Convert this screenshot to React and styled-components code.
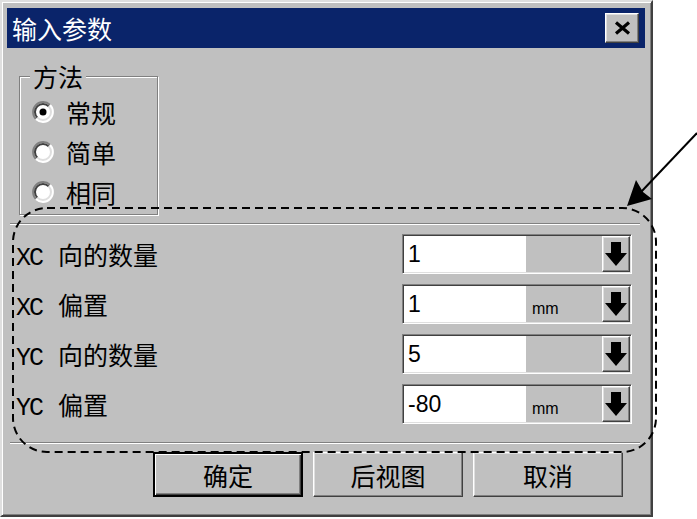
import React from 'react';
import styled, { createGlobalStyle, css } from 'styled-components';

const GlobalStyle = createGlobalStyle`
  html, body { margin: 0; padding: 0; background: #fff; }
  body { font-family: "Noto Sans CJK SC", "Liberation Sans", sans-serif; }
`;

const raised = css`
  box-sizing: border-box;
  background: #c0c0c0;
  border: 1px solid;
  border-color: #fff #404040 #404040 #fff;
  box-shadow: inset -1px -1px 0 #808080, inset 1px 1px 0 #dfdfdf;
`;

const Page = styled.div`
  position: relative;
  width: 697px;
  height: 519px;
  overflow: hidden;
`;

const Dialog = styled.div`
  box-sizing: border-box;
  width: 653px;
  height: 517px;
  padding-top: 6px;
  background: #c0c0c0;
  border: 2px solid;
  border-color: #dfdfdf #404040 #404040 #dfdfdf;
  box-shadow: inset 1px 1px 0 #fff, inset -1px -1px 0 #808080;
  display: flex;
  flex-direction: column;
`;

const TitleBar = styled.div`
  height: 40px;
  margin: 0 6px 0 5px;
  padding: 0 6px 0 5px;
  background: #0a246a;
  color: #fff;
  font-size: 25px;
  display: flex;
  align-items: center;
  justify-content: space-between;
`;

const CloseButton = styled.div`
  ${raised};
  width: 34px;
  height: 30px;
  display: flex;
  align-items: center;
  justify-content: center;
`;

const GroupBox = styled.fieldset`
  box-sizing: border-box;
  width: 139px;
  min-inline-size: 0;
  margin: 14px 0 0 17px;
  padding: 2px 0 2px 12px;
  border: 1px solid #808080;
  box-shadow: inset 1px 1px 0 #fff, 1px 1px 0 #fff;
`;

const Legend = styled.legend`
  margin-left: -2px;
  padding: 0 3px;
  background: #c0c0c0;
  font-size: 25px;
  line-height: 28px;
`;

const RadioRow = styled.div`
  height: 40px;
  display: flex;
  align-items: center;
  gap: 12px;
  font-size: 25px;
`;

const Separator = styled.div`
  height: 0;
  border-top: 1px solid #808080;
  border-bottom: 1px solid #fff;
  margin: ${(p) => p.$top}px 11px 0 8px;
`;

const Params = styled.div`
  display: grid;
  grid-template-columns: 1fr 230px;
  grid-auto-rows: 40px;
  row-gap: 10px;
  margin: 9px 19px 0 14px;
`;

const Label = styled.div`
  font-size: 25px;
  line-height: 40px;
  white-space: nowrap;
`;

const Axis = styled.span`
  display: inline-block;
  width: 42px;
  font-family: "Liberation Mono", monospace;
  font-size: 25px;
  letter-spacing: -2px;
`;

const Field = styled.div`
  box-sizing: border-box;
  display: flex;
  padding: 1px;
  border: 1px solid;
  border-color: #808080 #fff #fff #808080;
  box-shadow: inset 1px 1px 0 #404040, inset -1px -1px 0 #dfdfdf;
`;

const TextBox = styled.div`
  width: 118px;
  padding-left: 4px;
  background: #fff;
  display: flex;
  align-items: center;
  font-family: "Liberation Sans", sans-serif;
  font-size: 23px;
`;

const Unit = styled.div`
  flex: 1;
  align-self: flex-end;
  padding: 0 0 4px 6px;
  font-family: "Liberation Sans", sans-serif;
  font-size: 16px;
`;

const SpinButton = styled.div`
  ${raised};
  width: 28px;
  display: flex;
  align-items: center;
  justify-content: center;
`;

const ButtonRow = styled.div`
  display: flex;
  justify-content: flex-end;
  gap: 10px;
  margin: 8px 28px 0 0;
`;

const Button = styled.div`
  ${raised};
  width: 150px;
  height: 45px;
  display: flex;
  align-items: center;
  justify-content: center;
  font-size: 25px;
  ${(p) => p.$default && css`
    border: 2px solid #000;
    box-shadow: inset 1px 1px 0 #fff, inset -1px -1px 0 #404040, inset -2px -2px 0 #808080;
  `}
`;

const Overlay = styled.svg`
  position: absolute;
  top: 0;
  left: 0;
  pointer-events: none;
`;

function Radio({ checked }) {
  return (
    <svg width="22" height="22" viewBox="0 0 22 22">
      <circle cx="11" cy="11" r="10" fill="#fff" />
      <path d="M3.93 18.07 A10 10 0 0 1 18.07 3.93" stroke="#808080" strokeWidth="2" fill="none" />
      <path d="M18.07 3.93 A10 10 0 0 1 3.93 18.07" stroke="#fff" strokeWidth="2" fill="none" />
      <path d="M5.34 16.66 A8 8 0 0 1 16.66 5.34" stroke="#404040" strokeWidth="2" fill="none" />
      <path d="M16.66 5.34 A8 8 0 0 1 5.34 16.66" stroke="#dfdfdf" strokeWidth="2" fill="none" />
      {checked && <circle cx="11" cy="11" r="3.5" fill="#000" />}
    </svg>
  );
}

function DownArrow() {
  return (
    <svg width="24" height="30" viewBox="0 0 24 30">
      <rect x="7" y="3" width="10" height="12" fill="#000" />
      <polygon points="1,14 23,14 12,27" fill="#000" />
    </svg>
  );
}

const params = [
  { axis: 'XC', label: '向的数量', value: '1' },
  { axis: 'XC', label: '偏置', value: '1', unit: 'mm' },
  { axis: 'YC', label: '向的数量', value: '5' },
  { axis: 'YC', label: '偏置', value: '-80', unit: 'mm' }
];

export default function App() {
  return (
    <Page>
      <GlobalStyle />
      <Dialog>
        <TitleBar>
          输入参数
          <CloseButton>
            <svg width="17" height="14" viewBox="0 0 17 14">
              <path d="M2 1.5 L15 12.5 M15 1.5 L2 12.5" stroke="#000" strokeWidth="3.2" />
            </svg>
          </CloseButton>
        </TitleBar>
        <GroupBox>
          <Legend>方法</Legend>
          <RadioRow><Radio checked />常规</RadioRow>
          <RadioRow><Radio />简单</RadioRow>
          <RadioRow><Radio />相同</RadioRow>
        </GroupBox>
        <Separator $top={8} />
        <Params>
          {params.map((p, i) => (
            <React.Fragment key={i}>
              <Label><Axis>{p.axis}</Axis>{p.label}</Label>
              <Field>
                <TextBox>{p.value}</TextBox>
                <Unit>{p.unit}</Unit>
                <SpinButton><DownArrow /></SpinButton>
              </Field>
            </React.Fragment>
          ))}
        </Params>
        <Separator $top={18} />
        <ButtonRow>
          <Button $default>确定</Button>
          <Button>后视图</Button>
          <Button>取消</Button>
        </ButtonRow>
      </Dialog>
      <Overlay width="697" height="519" viewBox="0 0 697 519">
        <rect x="13" y="208" width="643" height="244" rx="34" fill="none"
          stroke="#000" strokeWidth="2" strokeDasharray="8 5" />
        <line x1="697" y1="133" x2="641" y2="192" stroke="#000" strokeWidth="2" />
        <polygon points="627,206 652,199 643,192 636,180" fill="#000" />
      </Overlay>
    </Page>
  );
}
